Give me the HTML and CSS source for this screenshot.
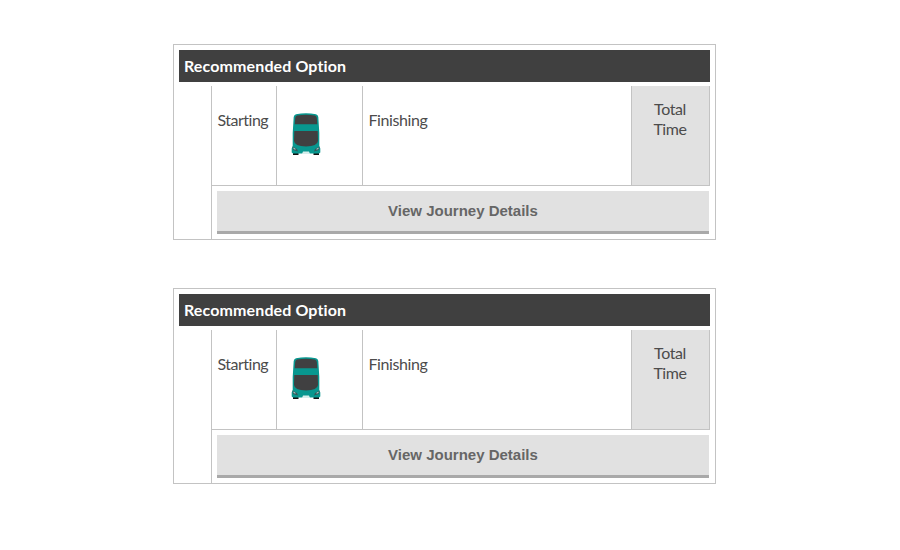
FILE: index.html
```html
<!DOCTYPE html>
<html lang="en">
<head>
<meta charset="utf-8">
<title>Journey options</title>
<link rel="stylesheet" href="styles.css">
</head>
<body>
<svg width="0" height="0" class="defs" aria-hidden="true">
  <symbol id="bus" viewBox="0 0 30 43">
    <path d="M2 38h5.500v4H2zM22.500 38H28v4h-5.500z" fill="#111"/>
    <path d="M5 1.200Q15-.5 25 1.200Q27 1.800 27.300 4L28.300 20V33L29.300 35.500V39.500L28 40.500H2L.700 39.500V35.500L1.700 33V20L2.700 4Q3 1.800 5 1.200z" fill="#08978f"/>
    <path d="M6 2.400Q15 .9 24 2.400Q25.600 3 25.800 5L26.300 11.300H3.700L4.200 5Q4.400 3 6 2.400z" fill="#404041"/>
    <path d="M3.300 18H26.700L27 28Q26.500 33.200 15 33.500Q3.500 33.200 3 28z" fill="#404041"/>
    <path d="M1.500 33.500l4.500 2.500 1 2.500-5-1.500zM28.500 33.500L24 36l-1 2.500 5-1.500z" fill="#36595a"/>
    <path d="M2.500 34.500l2 1.200v1l-2-.7zM27.500 34.500l-2 1.200v1l2-.7z" fill="#a7cfcd"/>
    <path d="M12 38.500h6l1 2.500h-8z" fill="#d5eeec"/>
  </symbol>
</svg>
<main class="options">
  <section class="option">
    <h2 class="option-title">Recommended Option</h2>
    <div class="option-body">
      <div class="legs">
        <div class="start">Starting</div>
        <div class="mode"><svg class="bus"><use href="#bus"/></svg></div>
        <div class="finish">Finishing</div>
        <div class="total">Total<br>Time</div>
      </div>
      <button class="details">View Journey Details</button>
    </div>
  </section>
  <section class="option">
    <h2 class="option-title">Recommended Option</h2>
    <div class="option-body">
      <div class="legs">
        <div class="start">Starting</div>
        <div class="mode"><svg class="bus"><use href="#bus"/></svg></div>
        <div class="finish">Finishing</div>
        <div class="total">Total<br>Time</div>
      </div>
      <button class="details">View Journey Details</button>
    </div>
  </section>
</main>
</body>
</html>
```
FILE: styles.css
```css
* { box-sizing: border-box; }
body {
  margin: 0;
  background: #fff;
  color: #4c4c4c;
  font: 16px/20px Lato, "Liberation Sans", sans-serif;
  font-variant-ligatures: none;
}
.defs { display: block; }
.options {
  display: flex;
  flex-direction: column;
  gap: 48px;
  width: 543px;
  margin: 44px 0 0 173px;
}
.option {
  height: 196px;
  padding-top: 5px;
  border: 1px solid #c3c3c3;
}
.option-title {
  height: 32px;
  margin: 0 5px 4px;
  padding: 0 5px;
  background: #404040;
  color: #fff;
  font-size: 16px;
  font-weight: 700;
  line-height: 31px;
  letter-spacing: 0.12px;
}
.option-body {
  height: 153px;
  margin: 0 5px 0 37px;
  border-left: 1px solid #c3c3c3;
}
.legs {
  display: grid;
  grid-template-columns: 64px 86px 269px 78px;
  height: 100px;
  border-bottom: 1px solid #c3c3c3;
  border-right: 1px solid #c3c3c3;
  letter-spacing: -0.4px;
}
.start { padding: 24px 0 0 5.5px; letter-spacing: -0.5px; }
.mode, .finish, .total { border-left: 1px solid #c3c3c3; }
.mode { padding: 27px 0 0 14px; }
.bus { display: block; width: 30px; height: 43px; }
.finish { padding: 24px 0 0 5.5px; }
.total {
  padding-top: 13px;
  padding-right: 1px;
  background: #e1e1e1;
  text-align: center;
}
.details {
  display: block;
  width: 492px;
  height: 43px;
  margin: 5px 0 0 5px;
  padding: 0;
  border: 0;
  border-bottom: 3px solid #a9a9a9;
  background: #e1e1e1;
  color: #666;
  font: bold 15px/40px "Liberation Sans", Arial, sans-serif;
}
```
